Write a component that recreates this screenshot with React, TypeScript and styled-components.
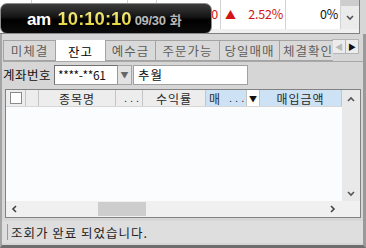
import React from "react";
import styled, { createGlobalStyle } from "styled-components";

const KR = `"Noto Sans CJK KR", "Liberation Sans", sans-serif`;

const Global = createGlobalStyle`
  html, body { margin: 0; padding: 0; width: 366px; height: 248px; overflow: hidden; background: #d6d6d6; }
  * { box-sizing: border-box; }
`;

const Frame = styled.div`
  width: 366px;
  height: 248px;
  display: flex;
  flex-direction: column;
  background: #d6d6d6;
  font-family: ${KR};
  font-size: 12px;
  overflow: hidden;
`;

/* ---------- top ticker + clock ---------- */
const Top = styled.div`
  position: relative;
  height: 34px;
  flex-shrink: 0;
`;

const Ticker = styled.div`
  width: 360px;
  height: 34px;
  display: flex;
  flex-direction: column;
  background: #fff;
  border-right: 1px solid #808080;
  border-bottom: 1px solid #808080;
`;

const TickerRow = styled.div`
  display: flex;
  height: 29px;
`;

const TickerCell = styled.div<{ $w: number; $color?: string }>`
  width: ${(p) => p.$w}px;
  flex-shrink: 0;
  border-right: 1px solid #d2d2d2;
  display: flex;
  align-items: center;
  justify-content: flex-end;
  padding: 0 2px 2px;
  color: ${(p) => p.$color || "#111"};
  font-family: ${KR};
  font-size: 12.5px;
  letter-spacing: -0.2px;
`;

const Up = styled.span`
  color: #d21414;
  font-size: 11px;
  margin-left: 2px;
  margin-right: auto;
`;

const TickerScroll = styled.div`
  flex: 1;
  display: flex;
  flex-direction: column;
  background: #ebebeb;
`;

const TickerThumb = styled.div`
  height: 6px;
  background: #cdcdcd;
`;

const ChevronBox = styled.div`
  flex: 1;
  display: flex;
  align-items: center;
  justify-content: center;
  color: #555;
`;

const TickerFoot = styled.div`
  flex: 1;
  background: #f0f0f0;
`;

const Clock = styled.div`
  position: absolute;
  left: 0;
  top: 3px;
  width: 212px;
  height: 31px;
  border: 1px solid #8c8c8c;
  border-radius: 7px;
  background: linear-gradient(#3c3c3c 0%, #141414 45%, #000 55%, #0c0c0c 100%);
  display: flex;
  align-items: baseline;
  padding: 4px 0 0 26px;
  font-family: "Liberation Sans", Arial, sans-serif;
  font-weight: bold;
`;

const AmPm = styled.span`
  color: #fff;
  font-size: 17px;
  letter-spacing: -0.5px;
`;

const Time = styled.span`
  margin-left: 7px;
  font-size: 18.5px;
  background: linear-gradient(#f6ee8c, #e2cf2e);
  -webkit-background-clip: text;
  background-clip: text;
  color: transparent;
`;

const DateText = styled.span`
  margin-left: 3px;
  font-size: 13px;
  color: #b8b8b8;
  letter-spacing: -0.3px;
`;

const DayText = styled.span`
  font-family: ${KR};
  margin-left: 4px;
`;

/* ---------- window ---------- */
const Window = styled.div`
  flex: 1;
  display: flex;
  flex-direction: column;
  border-left: 2px solid #a4a4a4;
  border-right: 3px solid #9a9a9a;
  border-bottom: 3px solid #6e6e6e;
`;

const TabRow = styled.div`
  display: flex;
  height: 22px;
  margin: 6px 0 0 1px;
  border-bottom: 1px solid #a8a8a8;
`;

const TabStrip = styled.div`
  width: 330px;
  display: flex;
  align-items: flex-end;
  overflow: hidden;
  padding-left: 1px;
`;

const Tab = styled.div<{ $w: number; $active?: boolean }>`
  width: ${(p) => p.$w}px;
  flex-shrink: 0;
  height: ${(p) => (p.$active ? 23 : 21)}px;
  margin-left: -1px;
  margin-bottom: ${(p) => (p.$active ? -1 : 0)}px;
  display: flex;
  align-items: center;
  justify-content: center;
  background: ${(p) => (p.$active ? "#fff" : "#d9d9d9")};
  border: 1px solid #a3a3a3;
  border-bottom: ${(p) => (p.$active ? "none" : "1px solid #a3a3a3")};
  color: ${(p) => (p.$active ? "#000" : "#5e5e5e")};
  font-size: 12.5px;
  letter-spacing: 1px;
  position: relative;
  z-index: ${(p) => (p.$active ? 1 : 0)};
`;

const Arrows = styled.div`
  display: flex;
  align-self: flex-start;
  margin-top: -1px;
`;

const ArrowBtn = styled.div<{ $disabled?: boolean }>`
  width: 14px;
  height: 15px;
  display: flex;
  align-items: center;
  justify-content: center;
  background: #ececec;
  border: 1px solid #b4b4b4;
  margin-left: -1px;
  color: ${(p) => (p.$disabled ? "#b8b8b8" : "#111")};
  font-size: 8px;
`;

const AccountRow = styled.div`
  display: flex;
  align-items: center;
  height: 21px;
  margin: 2px 0 0 1px;
`;

const Label = styled.div`
  width: 51px;
  font-size: 12.5px;
  letter-spacing: 0.5px;
  color: #111;
`;

const AcctInput = styled.div`
  width: 64px;
  height: 20px;
  background: #fff;
  border: 1px solid #9a9a9a;
  border-top-color: #707070;
  border-left-color: #707070;
  display: flex;
  align-items: center;
  padding-left: 3px;
  font-family: ${KR};
  font-size: 12px;
  color: #111;
  letter-spacing: -0.4px;
`;

const DropBtn = styled.div`
  width: 14px;
  height: 20px;
  background: #e2e2e2;
  border: 1px solid #a6a6a6;
  border-left: none;
  display: flex;
  align-items: center;
  justify-content: center;
  color: #666;
  font-size: 8px;
`;

const NameField = styled.div`
  width: 115px;
  height: 20px;
  margin-left: 1px;
  background: #fff;
  border: 1px solid #a0a0a0;
  display: flex;
  align-items: center;
  padding-left: 4px;
  font-size: 12.5px;
  color: #111;
  letter-spacing: 1px;
`;

/* ---------- grid ---------- */
const Grid = styled.div`
  width: 356px;
  height: 129px;
  margin: 4px 0 0 3px;
  border: 1px solid #828282;
  display: grid;
  grid-template-columns: 1fr 18px;
  grid-template-rows: 1fr 16px;
  background: #fbfcfe;
`;

const GridMain = styled.div`
  display: flex;
  flex-direction: column;
  min-width: 0;
`;

const HeaderRow = styled.div`
  display: flex;
  height: 17px;
  background: #ededed;
  border-bottom: 1px solid #d6d6d6;
`;

const HeadCell = styled.div<{ $w: number; $blue?: boolean; $align?: string }>`
  width: ${(p) => p.$w}px;
  flex-shrink: 0;
  display: flex;
  align-items: center;
  justify-content: ${(p) => p.$align || "center"};
  background: ${(p) => (p.$blue ? "#cde2f4" : "transparent")};
  border-right: 1px solid #c4c4c4;
  color: #2a2a2a;
  font-size: 12px;
  letter-spacing: 1px;
  padding-left: ${(p) => (p.$align ? 3 : 0)}px;
`;

const Check = styled.div`
  width: 12px;
  height: 12px;
  background: #fff;
  border: 1px solid #8a8a8a;
`;

const Dots = styled.span`
  letter-spacing: 3px;
  margin-left: 8px;
  font-family: "Liberation Sans", sans-serif;
  font-size: 11px;
`;

const HeadDrop = styled.div`
  width: 13px;
  flex-shrink: 0;
  background: #fff;
  border-right: 1px solid #c4c4c4;
  display: flex;
  align-items: center;
  justify-content: center;
  font-size: 8px;
  color: #111;
`;

const Body = styled.div`
  flex: 1;
  background: #fbfcfe;
`;

const VScroll = styled.div`
  background: #e9e9e9;
  display: flex;
  flex-direction: column;
  justify-content: space-between;
  align-items: center;
  padding: 6px 0 3px;
  color: #555;
`;

const HScroll = styled.div`
  background: #f0f0f0;
  display: flex;
  align-items: center;
  padding: 0 6px 0 5px;
  color: #444;
`;

const Thumb = styled.div`
  width: 48px;
  height: 14px;
  margin-left: 79px;
  background: #cdcdcd;
`;

const Spacer = styled.div`
  flex: 1;
`;

const Corner = styled.div`
  background: #f0f0f0;
`;

/* ---------- status ---------- */
const Status = styled.div`
  height: 22px;
  margin-top: 3px;
  display: flex;
  align-items: center;
  padding-left: 4px;
  background: #dedede;
  color: #222;
  font-size: 12.5px;
  letter-spacing: 1px;
`;

const Grip = styled.div`
  width: 3px;
  height: 16px;
  margin-right: 2px;
  background-image: radial-gradient(circle, #9a9a9a 0.7px, transparent 0.8px);
  background-size: 3px 2px;
`;

const Chevron = ({ dir }: { dir: "up" | "down" | "left" | "right" }) => {
  const pts: Record<string, string> = {
    up: "1,5 4,2 7,5",
    down: "1,2 4,5 7,2",
    left: "5,1 2,4 5,7",
    right: "3,1 6,4 3,7",
  };
  return (
    <svg width="8" height="8" viewBox="0 0 8 8">
      <polyline points={pts[dir]} fill="none" stroke="currentColor" strokeWidth="1.6" />
    </svg>
  );
};

export default function App() {
  return (
    <>
      <Global />
      <Frame>
        <Top>
          <Ticker>
            <TickerRow>
              <TickerCell $w={32} />
              <TickerCell $w={96} />
              <TickerCell $w={29} />
              <TickerCell $w={64} $color="#d21414">00</TickerCell>
              <TickerCell $w={65} $color="#d21414">
                <Up>▲</Up>2.52%
              </TickerCell>
              <TickerCell $w={55}>0%</TickerCell>
              <TickerScroll>
                <TickerThumb />
                <ChevronBox>
                  <Chevron dir="down" />
                </ChevronBox>
              </TickerScroll>
            </TickerRow>
            <TickerFoot />
          </Ticker>
          <Clock>
            <AmPm>am</AmPm>
            <Time>10:10:10</Time>
            <DateText>
              09/30<DayText>화</DayText>
            </DateText>
          </Clock>
        </Top>
        <Window>
          <TabRow>
            <TabStrip>
              <Tab $w={53}>미체결</Tab>
              <Tab $w={51} $active>잔고</Tab>
              <Tab $w={51}>예수금</Tab>
              <Tab $w={65}>주문가능</Tab>
              <Tab $w={61}>당일매매</Tab>
              <Tab $w={58}>체결확인</Tab>
            </TabStrip>
            <Arrows>
              <ArrowBtn $disabled>◀</ArrowBtn>
              <ArrowBtn>▶</ArrowBtn>
            </Arrows>
          </TabRow>
          <AccountRow>
            <Label>계좌번호</Label>
            <AcctInput>****-**61</AcctInput>
            <DropBtn>▼</DropBtn>
            <NameField>추월</NameField>
          </AccountRow>
          <Grid>
            <GridMain>
              <HeaderRow>
                <HeadCell $w={20}>
                  <Check />
                </HeadCell>
                <HeadCell $w={13} />
                <HeadCell $w={77}>종목명</HeadCell>
                <HeadCell $w={27}>
                  <Dots>...</Dots>
                </HeadCell>
                <HeadCell $w={63}>수익률</HeadCell>
                <HeadCell $w={41} $blue $align="flex-start">
                  매<Dots>...</Dots>
                </HeadCell>
                <HeadDrop>▼</HeadDrop>
                <HeadCell $w={82} $blue>매입금액</HeadCell>
              </HeaderRow>
              <Body />
            </GridMain>
            <VScroll>
              <Chevron dir="up" />
              <Chevron dir="down" />
            </VScroll>
            <HScroll>
              <Chevron dir="left" />
              <Thumb />
              <Spacer />
              <Chevron dir="right" />
            </HScroll>
            <Corner />
          </Grid>
          <Status>
            <Grip />
            조회가 완료 되었습니다.
          </Status>
        </Window>
      </Frame>
    </>
  );
}
